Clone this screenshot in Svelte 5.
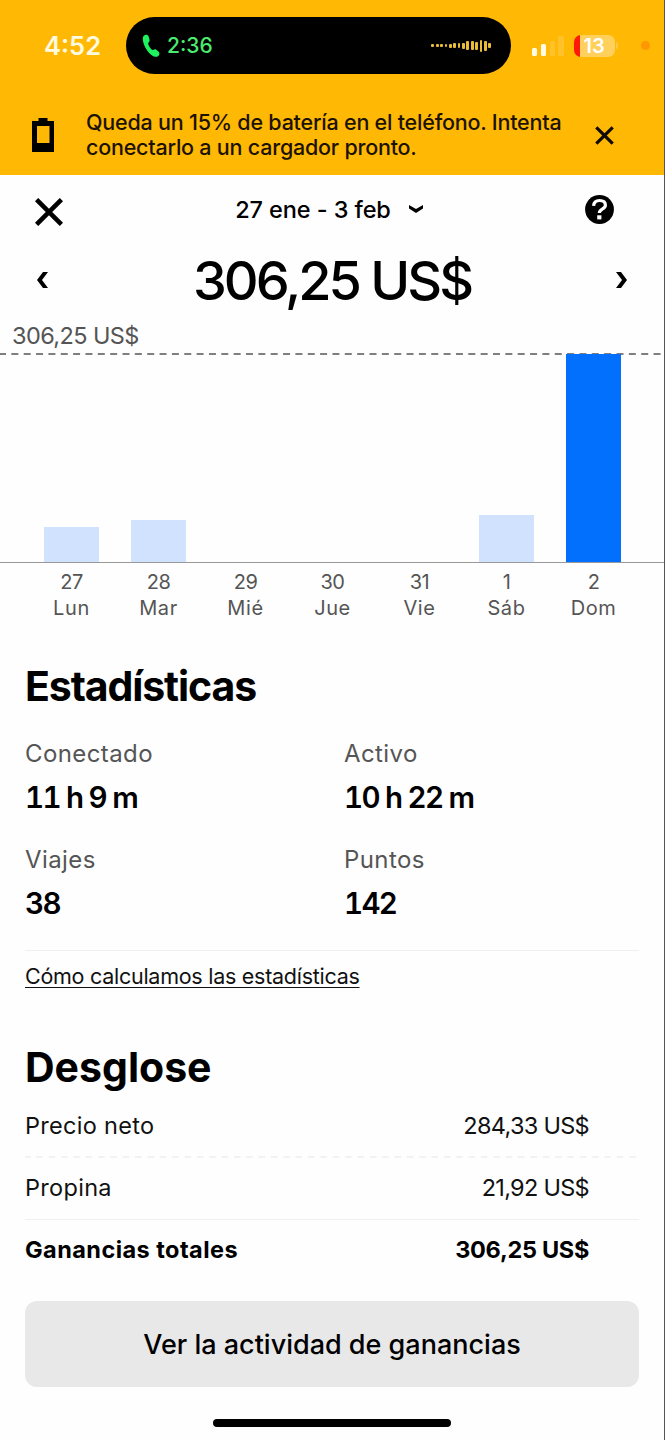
<script>
    let periodo = '27 ene - 3 feb';
    let total = '306,25 US$';

    // Altura de cada barra en píxeles
    let dias = [
        { fecha: '27', nombre: 'Lun', alto: 35 },
        { fecha: '28', nombre: 'Mar', alto: 42 },
        { fecha: '29', nombre: 'Mié', alto: 0 },
        { fecha: '30', nombre: 'Jue', alto: 0 },
        { fecha: '31', nombre: 'Vie', alto: 0 },
        { fecha: '1', nombre: 'Sáb', alto: 47 },
        { fecha: '2', nombre: 'Dom', alto: 208, activo: true }
    ];

    let estadisticas = [
        { label: 'Conectado', value: '11 h 9 m' },
        { label: 'Activo', value: '10 h 22 m' },
        { label: 'Viajes', value: '38' },
        { label: 'Puntos', value: '142' }
    ];

    // Onda de audio de la llamada
    let onda = [3, 3, 3, 3, 4, 5, 5, 6, 9, 9, 8, 12, 10, 5];
</script>

<svelte:head>
    <title>Ganancias</title>
</svelte:head>

<main>
    <header>
        <div class="status-bar">
            <span class="clock">4:52</span>
            <div class="island">
                <svg class="phone" width="18" height="24" viewBox="0 0 18 24">
                    <path d="M2 1.5C3.800.4 6 .6 6.700 2.800L7.600 6C8 7.500 6.300 8.200 6.200 9.300C6.100 11 9 15.300 10.600 16C11.800 16.500 12.500 14.900 14 15.500L16.400 17.600C18 19 17.600 21 16 22.200C13 24 8.500 21.500 5 16.200C1.500 11 -.8 4 2 1.500Z" fill="#1ff25e" />
                </svg>
                <span class="call-time">2:36</span>
                <div class="wave">
                    {#each onda as alto}
                        <i style="height: {alto}px"></i>
                    {/each}
                </div>
            </div>
            <div class="signal">
                <i class="on"></i><i class="on"></i><i></i><i></i>
            </div>
            <div class="battery"><span>13</span></div>
            <div class="tip"></div>
            <div class="mic-dot"></div>
        </div>
        <div class="alert">
            <svg class="battery-icon" width="22" height="34" viewBox="0 0 22 34">
                <path fill-rule="evenodd" d="M6.500 0H15.500V3H22V34H0V3H6.500ZM5 8V25H17.500V8Z" />
            </svg>
            <p>Queda un 15% de batería en el teléfono. Intenta<br />conectarlo a un cargador pronto.</p>
            <svg width="19" height="19" viewBox="0 0 19 19">
                <path d="M1.300 1.300L17.700 17.700M17.700 1.300L1.300 17.700" fill="none" stroke="#120c00" stroke-width="3.200" />
            </svg>
        </div>
    </header>

    <nav>
        <svg class="close" width="28" height="28" viewBox="0 0 28 28">
            <path d="M1.600 1.600L26.400 26.400M26.400 1.600L1.600 26.400" fill="none" stroke="#000" stroke-width="4.600" />
        </svg>
        <div class="period">
            <span>{periodo}</span>
            <svg width="14" height="8" viewBox="0 0 14 8">
                <path d="M0 0L7 4L14 0V3.600L7 8L0 3.600Z" />
            </svg>
        </div>
        <svg class="help" width="29" height="29" viewBox="0 0 29 29">
            <circle cx="14.500" cy="14.500" r="14.400" />
            <path d="M8.600 10.800C8.800 7.300 11 5.500 14.600 5.500C18.200 5.500 20.400 7.300 20.400 10.200C20.400 14.200 14.600 13.400 14.300 18" fill="none" stroke="#fff" stroke-width="3.200" />
            <path d="M12.200 20.300H16.400V24.400H12.200Z" fill="#fff" />
        </svg>
    </nav>

    <div class="total">
        <svg width="11" height="16" viewBox="0 0 11 16">
            <path d="M6 0H11L5 8L11 16H6L0 8Z" />
        </svg>
        <h1>{total}</h1>
        <svg width="11" height="16" viewBox="0 0 11 16">
            <path d="M5 0H0L6 8L0 16H5L11 8Z" />
        </svg>
    </div>

    <section class="chart">
        <div class="max">{total}</div>
        <svg class="dashes" width="665" height="2" viewBox="0 0 665 2">
            <path d="M-1 1H665" stroke="#555" stroke-width="1.500" stroke-dasharray="7 5.350" />
        </svg>
        <div class="bars">
            {#each dias as dia}
                <div class="slot">
                    <div class="bar" class:active={dia.activo} style="height: {dia.alto}px"></div>
                </div>
            {/each}
        </div>
        <div class="days">
            {#each dias as dia}
                <div class="day"><span class="num">{dia.fecha}</span><span class="name">{dia.nombre}</span></div>
            {/each}
        </div>
    </section>

    <section class="stats">
        <h2 class="tight">Estadísticas</h2>
        <div class="grid">
            {#each estadisticas as item}
                <div class="stat">
                    <div class="label">{item.label}</div>
                    <div class="value">{item.value}</div>
                </div>
            {/each}
        </div>
        <div class="more"><a href="#stats">Cómo calculamos las estadísticas</a></div>
    </section>

    <section class="breakdown">
        <h2>Desglose</h2>
        <div class="row"><span>Precio neto</span><span class="amount">284,33 US$</span></div>
        <svg class="dashes" width="614" height="2" viewBox="0 0 614 2">
            <path d="M-1 1H614" stroke="#eee" stroke-width="1.500" stroke-dasharray="6.500 5.850" />
        </svg>
        <div class="row second"><span>Propina</span><span class="amount">21,92 US$</span></div>
        <div class="row sum"><span>Ganancias totales</span><span class="amount">{total}</span></div>
    </section>

    <button>Ver la actividad de ganancias</button>
    <div class="home"></div>
</main>

<style>
    :global(body) {
        background: #fff;
    }

    main {
        box-sizing: border-box;
        width: 665px;
        height: 1440px;
        border-right: 1px solid #555;
        background: #fefefe;
        color: #000;
        font-family: 'Inter', 'Liberation Sans', sans-serif;
        overflow: hidden;
    }

    h1, h2, p {
        margin: 0;
    }

    svg {
        display: block;
        flex-shrink: 0;
    }

    header {
        height: 175px;
        background: #ffb804;
    }

    .status-bar {
        display: flex;
        align-items: center;
        height: 57px;
        padding-top: 17px;
    }

    .clock {
        width: 82px;
        padding-left: 44px;
        color: #fffbe0;
        font-size: 25.500px;
        font-weight: 600;
    }

    .island {
        display: flex;
        align-items: center;
        box-sizing: border-box;
        width: 385px;
        height: 57px;
        padding: 0 20px 0 16px;
        border-radius: 29px;
        background: #000;
    }

    .call-time {
        flex: 1;
        padding-left: 7px;
        color: #4bea70;
        font-size: 21px;
        font-weight: 500;
    }

    .wave {
        display: flex;
        align-items: center;
        gap: 1.700px;
    }

    .wave i {
        width: 2.700px;
        border-radius: 1px;
        background: #e9bd38;
    }

    .signal {
        display: flex;
        align-items: flex-end;
        gap: 3.500px;
        height: 20px;
        margin: 0 10px 0 21px;
    }

    .signal i {
        width: 5.300px;
        height: 15px;
        border-radius: 1.500px;
        background: #ffc22a;
    }

    .signal i:last-child {
        height: 20px;
    }

    .signal .on {
        height: 7.500px;
        background: #fffbe6;
    }

    .signal .on + .on {
        height: 11.500px;
    }

    .battery {
        width: 41px;
        height: 22px;
        border-radius: 7px;
        background: linear-gradient(to right, #ff1a08 6px, #ffd05c 6px);
        color: #fff;
        font-size: 20px;
        font-weight: 600;
        line-height: 22px;
        text-align: center;
    }

    .tip {
        width: 2px;
        height: 7px;
        margin-left: 1.500px;
        border-radius: 0 2px 2px 0;
        background: #ffc83f;
    }

    .mic-dot {
        width: 9px;
        height: 9px;
        margin-left: 23px;
        border-radius: 50%;
        background: #ff9800;
    }

    .alert {
        display: flex;
        align-items: center;
        height: 51px;
        padding: 35.500px 50px 0 32px;
    }

    .alert p {
        flex: 1;
        padding-left: 32px;
        color: #1c1200;
        font-size: 21.500px;
        font-weight: 500;
        line-height: 25.500px;
        letter-spacing: -0.220px;
        white-space: nowrap;
    }

    nav {
        display: flex;
        align-items: center;
        justify-content: space-between;
        height: 68px;
        padding: 0 50px 0 35px;
    }

    .close {
        margin-top: 5px;
    }

    .period {
        display: flex;
        align-items: center;
        gap: 18px;
        padding-left: 10px;
        font-size: 23.500px;
        font-weight: 500;
        letter-spacing: -0.100px;
    }

    .total {
        display: flex;
        align-items: center;
        justify-content: space-between;
        height: 74px;
        padding: 0 37px;
    }

    h1 {
        font-size: 54px;
        font-weight: 500;
        letter-spacing: -3px;
    }

    .max {
        height: 36px;
        padding-left: 12px;
        color: #555;
        font-size: 23.500px;
        letter-spacing: -0.600px;
        line-height: 37px;
    }

    .bars {
        display: flex;
        align-items: flex-end;
        height: 207px;
        padding: 0 28px;
        border-bottom: 1px solid #999;
    }

    .slot {
        width: 87px;
        flex-shrink: 0;
    }

    .bar {
        width: 55px;
        margin: 0 auto;
        background: #d1e2fe;
    }

    .bar.active {
        background: #0270fc;
    }

    .days {
        display: flex;
        padding: 6px 28px 0;
        color: #555;
        font-size: 20px;
        line-height: 26px;
        text-align: center;
    }

    .day {
        display: flex;
        flex-direction: column;
        width: 87px;
        flex-shrink: 0;
    }

    .num {
        letter-spacing: -0.500px;
    }

    .name {
        letter-spacing: 0.600px;
    }

    h2 {
        height: 50px;
        font-size: 41px;
        font-weight: 700;
        line-height: 50px;
    }

    .tight {
        letter-spacing: -1.100px;
    }

    .stats {
        padding: 40px 25px 0;
    }

    .grid {
        display: grid;
        grid-template-columns: 319px 1fr;
        row-gap: 19.500px;
        padding: 25px 0 22.500px;
        border-bottom: 1px solid #efefef;
    }

    .label {
        color: #555;
        font-size: 24px;
        letter-spacing: 0.400px;
        line-height: 36px;
    }

    .value {
        font-size: 29.500px;
        font-weight: 600;
        font-variant-numeric: tabular-nums;
        letter-spacing: -1.700px;
        line-height: 50px;
    }

    .more {
        height: 52px;
        font-size: 21.500px;
        letter-spacing: -0.270px;
        line-height: 51px;
    }

    .more a {
        color: #111;
        text-underline-offset: 3px;
        text-decoration-thickness: 1px;
    }

    .breakdown {
        padding: 39px 25px 0;
    }

    .row {
        display: flex;
        justify-content: space-between;
        height: 64px;
        padding-right: 50px;
        color: #111;
        font-size: 23.500px;
        letter-spacing: 0.300px;
        line-height: 68px;
    }

    .second {
        height: 61px;
        line-height: 60px;
        border-bottom: 1px solid #f0f0f0;
    }

    .sum {
        height: 60px;
        color: #000;
        font-weight: 700;
        letter-spacing: 0.450px;
        line-height: 59px;
    }

    .amount {
        letter-spacing: -0.700px;
    }

    .sum .amount {
        letter-spacing: -0.300px;
    }

    button {
        display: block;
        width: 614px;
        height: 86px;
        margin: 21px 25px 0;
        padding: 0;
        border: none;
        border-radius: 12px;
        background: #e8e8e8;
        color: #000;
        font-family: inherit;
        font-size: 27px;
        font-weight: 500;
    }

    .home {
        width: 238px;
        height: 8px;
        margin: 32px auto 0;
        border-radius: 4px;
        background: #000;
    }
</style>
